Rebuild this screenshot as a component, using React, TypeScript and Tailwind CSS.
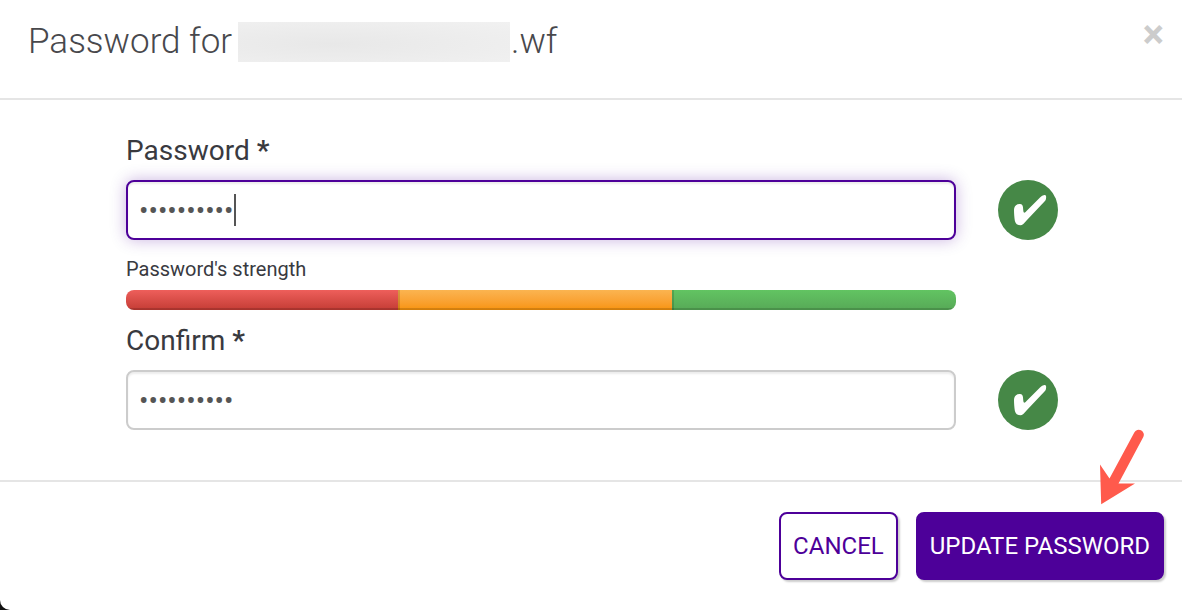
import { useState } from "react";

function ValidMark() {
  return (
    <svg viewBox="0 0 60 60" className="size-[60px] shrink-0" role="img" aria-label="Valid">
      <circle cx="30" cy="30" r="30" fill="#468847" />
      <path
        d="M16 30C16 26.500 18 24 21.500 24C24 23.800 24.800 25 25 27.500C25.300 30.500 25.300 32.700 26.300 32.700C27 32.700 27.600 32 28.500 31L42 17.500C44.500 15.300 46 14.800 47 15C48 15.200 48.400 16.500 48 18.500C47.800 20 47.500 20.500 46.500 21.500L29 40C26 43.500 24.500 45.300 22.300 45.300C19 45.300 17.500 43.500 16.800 40.500C16.300 37.500 16 33 16 30Z"
        fill="#fff"
      />
    </svg>
  );
}

function PasswordField({
  id,
  label,
  focused = false,
}: {
  id: string;
  label: string;
  focused?: boolean;
}) {
  const [value, setValue] = useState("0123456789");
  return (
    <div>
      <label htmlFor={id} className="block pt-[2px] text-[28px] leading-[58px] text-[#393a3f]">
        {label} <span className="font-bold">*</span>
      </label>
      <div className="flex items-center gap-[42px]">
        <div className="relative min-w-0 flex-1">
          <input
            id={id}
            type="password"
            value={value}
            onChange={(e) => setValue(e.target.value)}
            className={
              focused
                ? "block h-[60px] w-full rounded-lg border-2 border-[#4d0099] bg-white px-[11px] text-[28px] text-[#555] caret-transparent shadow-[inset_0_2px_2px_rgba(0,0,0,0.075),0_0_16px_rgba(77,0,153,0.3)] outline-none"
                : "block h-[60px] w-full rounded-lg border-2 border-[#ccc] bg-white px-[11px] text-[28px] text-[#555] shadow-[inset_0_2px_2px_rgba(0,0,0,0.075)] outline-none"
            }
          />
          {focused && <span className="absolute top-[14px] left-[108px] h-8 w-[2px] bg-[#555]" />}
        </div>
        <ValidMark />
      </div>
    </div>
  );
}

function StrengthMeter() {
  return (
    <div className="mr-[102px]">
      <p className="pt-[14px] pb-[6px] text-[20px] leading-[30px] text-[#393a3f]">Password's strength</p>
      <div className="flex h-5 overflow-hidden rounded-lg">
        <div className="flex-[272] bg-linear-to-b from-[#ee5f5b] to-[#c43c35] shadow-[inset_0_-2px_0_rgba(0,0,0,0.15)]" />
        <div className="flex-[274] bg-linear-to-b from-[#fbb450] to-[#f89406] shadow-[inset_2px_0_0_rgba(0,0,0,0.15),inset_0_-2px_0_rgba(0,0,0,0.15)]" />
        <div className="flex-[284] bg-linear-to-b from-[#62c462] to-[#57a957] shadow-[inset_2px_0_0_rgba(0,0,0,0.15),inset_0_-2px_0_rgba(0,0,0,0.15)]" />
      </div>
    </div>
  );
}

export default function App() {
  return (
    <div className="min-h-screen bg-[#111] font-['Roboto',sans-serif]">
      <section
        role="dialog"
        aria-labelledby="dialog-title"
        className="flex min-h-screen flex-col rounded-bl-[10px] bg-white"
      >
        <header className="flex items-start justify-between border-b-2 border-[#e5e5e5] pt-[22px] pr-[18px] pb-9 pl-7">
          <h1
            id="dialog-title"
            className="flex items-center text-[35px] leading-[40px] font-light text-[#48484c]"
          >
            Password for
            <span className="mr-px ml-[6px] h-10 w-[272px] bg-[radial-gradient(ellipse_at_35%_55%,#e8e8e8,#f1f1f1)]" />
            .wf
          </h1>
          <button
            type="button"
            aria-label="Close"
            className="text-[40px] leading-[26px] font-bold text-[#ccc]"
          >
            ×
          </button>
        </header>

        <form className="flex-1 pt-5 pr-[124px] pb-[50px] pl-[126px]">
          <PasswordField id="password" label="Password" focused />
          <StrengthMeter />
          <PasswordField id="confirm" label="Confirm" />
        </form>

        <footer className="flex justify-end gap-[18px] border-t-2 border-[#e5e5e5] pt-[30px] pr-[18px] pb-[30px]">
          <button
            type="button"
            className="h-[68px] rounded-lg border-2 border-[#4d0099] bg-white px-3 text-[24px] text-[#4d0099] shadow-[2px_2px_2px_rgba(0,0,0,0.2)]"
          >
            CANCEL
          </button>
          <div className="relative">
            <button
              type="button"
              className="h-[68px] rounded-lg border-2 border-[#4d0099] bg-[#4d0099] px-3 text-[24px] text-white shadow-[2px_2px_2px_rgba(0,0,0,0.2)]"
            >
              UPDATE PASSWORD
            </button>
            <svg
              viewBox="0 0 45 76"
              className="pointer-events-none absolute right-[19px] bottom-[75px] h-[76px] w-[45px]"
              aria-hidden="true"
            >
              <path
                d="M34.300 3.500A5 5 0 0 1 43.300 8L18.500 54.500H35L1.200 75.200L0 35.500L9.500 49.500Z"
                fill="#ff5a4c"
              />
            </svg>
          </div>
        </footer>
      </section>
    </div>
  );
}
